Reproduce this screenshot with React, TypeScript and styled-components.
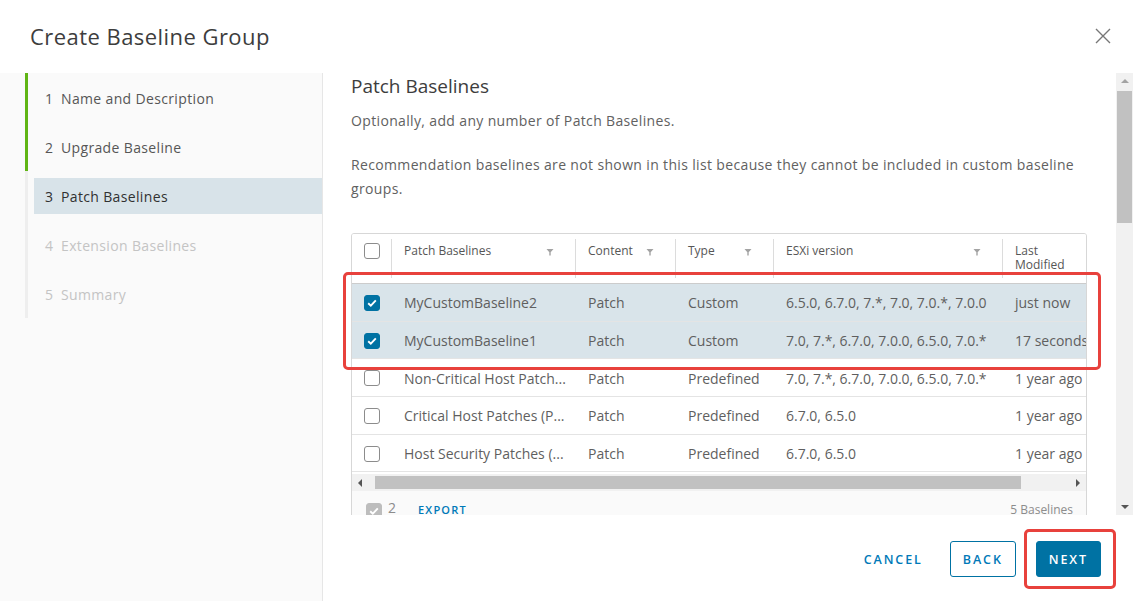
import React from "react";
import styled, { createGlobalStyle } from "styled-components";

const Global = createGlobalStyle`
  html, body { margin: 0; padding: 0; background: #fff; }
  body { font-family: "Open Sans", "Noto Sans", sans-serif; color: #565656; }
  * { box-sizing: border-box; }
`;

const Modal = styled.div`
  width: 1137px;
  height: 601px;
  display: flex;
  flex-direction: column;
  background: #fff;
  overflow: hidden;
`;

const Header = styled.div`
  height: 73px;
  display: flex;
  align-items: center;
  justify-content: space-between;
  padding: 0 26px 2px 30px;
`;

const Title = styled.h1`
  margin: 0;
  font-size: 22px;
  font-weight: 400;
  color: #3d3d3d;
  letter-spacing: 0.45px;
`;

const CloseBtn = styled.button`
  border: 0;
  background: none;
  padding: 0;
  width: 16px;
  height: 16px;
  display: flex;
`;

const Body = styled.div`
  flex: 1;
  display: flex;
  min-height: 0;
`;

const Sidebar = styled.nav`
  width: 323px;
  background: #fafafa;
  border-right: 1px solid #e6e6e6;
  padding-left: 25px;
`;

const StepWrap = styled.div<{ $done?: boolean }>`
  border-left: 3px solid ${(p) => (p.$done ? "#60b515" : "#eeeeee")};
  padding: 7px 0 6px 6px;
`;

const StepItem = styled.div<{ $active?: boolean; $disabled?: boolean }>`
  height: 36px;
  display: flex;
  align-items: center;
  padding-left: 11px;
  font-size: 14px;
  letter-spacing: 0.35px;
  background: ${(p) => (p.$active ? "#d8e3e9" : "transparent")};
  color: ${(p) => (p.$disabled ? "#c4c4c4" : p.$active ? "#313131" : "#565656")};
`;

const StepNum = styled.span`
  width: 16px;
`;

const Main = styled.div`
  flex: 1;
  display: flex;
  flex-direction: column;
  min-width: 0;
`;

const ScrollArea = styled.div`
  height: 442px;
  display: flex;
`;

const Content = styled.div`
  flex: 1;
  overflow: hidden;
  padding-left: 28px;
  padding-right: 29px;
`;

const Heading = styled.h2`
  margin: 1px 0 0;
  font-size: 19px;
  line-height: 24px;
  font-weight: 400;
  color: #3d3d3d;
`;

const Para = styled.p<{ $mt: number }>`
  margin: ${(p) => p.$mt}px 0 0;
  font-size: 14px;
  line-height: 24px;
  letter-spacing: 0.35px;
  color: #616161;
`;

const TableArea = styled.div`
  position: relative;
  margin-top: 32px;
`;

const Table = styled.div`
  width: 736px;
  border: 1px solid #d7d7d7;
  border-radius: 3px 3px 0 0;
  overflow: hidden;
`;

const Grid = styled.div`
  display: grid;
  grid-template-columns: 40px 184px 100px 98px 229px 140px;
  width: 791px;
`;

const HeadCell = styled.div<{ $first?: boolean }>`
  height: 50px;
  background: #fff;
  border-bottom: 1px solid #cccccc;
  position: relative;
  display: flex;
  align-items: flex-start;
  justify-content: ${(p) => (p.$first ? "center" : "space-between")};
  padding: ${(p) => (p.$first ? "9px 0 0" : "8px 26px 0 12px")};
  font-size: 12px;
  line-height: 14px;
  color: #565656;
  &::after {
    content: "";
    position: absolute;
    right: 0;
    top: 5px;
    bottom: 5px;
    width: 1px;
    background: #dcdcdc;
  }
`;

const HeadLabel = styled.span`
  padding-top: 2px;
`;

const FilterIcon = styled.svg`
  position: absolute;
  right: 22px;
  top: 14px;
`;

const Cell = styled.div<{ $sel?: boolean; $first?: boolean }>`
  height: 37.7px;
  display: flex;
  align-items: center;
  justify-content: ${(p) => (p.$first ? "center" : "flex-start")};
  padding-left: ${(p) => (p.$first ? "0" : "12px")};
  padding-top: 1px;
  background: ${(p) => (p.$sel ? "#d9e4ea" : "#fff")};
  border-bottom: 1px solid #e4e4e4;
  font-size: 14px;
  color: #5f5f5f;
  white-space: nowrap;
  overflow: hidden;
`;

const Box = styled.span<{ $checked?: boolean; $muted?: boolean }>`
  width: 16px;
  height: 16px;
  border-radius: 3px;
  display: inline-flex;
  align-items: center;
  justify-content: center;
  background: ${(p) => (p.$muted ? "#bdbdbd" : p.$checked ? "#0072a3" : "#fff")};
  border: 1px solid ${(p) => (p.$muted ? "#bdbdbd" : p.$checked ? "#0072a3" : "#8c8c8c")};
  flex: none;
`;

const HScroll = styled.div`
  height: 17px;
  margin-top: 2px;
  background: #f1f1f1;
  display: flex;
  align-items: center;
  padding: 0 5px;
  gap: 12px;
`;

const HThumb = styled.div`
  height: 13px;
  flex: 1;
  background: #c1c1c1;
  margin-right: 42px;
`;

const GridFooter = styled.div`
  height: 34px;
  background: #fafafa;
  display: flex;
  align-items: flex-start;
  padding: 12px 13px 0 14px;
  font-size: 12px;
  color: #8c8c8c;
`;

const FooterCount = styled.span`
  margin-left: 6px;
  font-size: 14px;
  line-height: 14px;
  margin-top: -2px;
`;

const ExportLink = styled.span`
  margin-left: 22px;
  color: #0079b8;
  letter-spacing: 1.2px;
  font-weight: 600;
  font-size: 11px;
  line-height: 14px;
`;

const FooterRight = styled.span`
  margin-left: auto;
  line-height: 14px;
`;

const Highlight = styled.div`
  position: absolute;
  border: 3px solid #e8413c;
  border-radius: 5px;
  pointer-events: none;
`;

const RowHighlight = styled(Highlight)`
  left: -8px;
  top: 39px;
  width: 758px;
  height: 98px;
`;

const VScroll = styled.div`
  width: 17px;
  margin-right: 4px;
  background: #f1f1f1;
  display: flex;
  flex-direction: column;
  align-items: center;
  padding: 5px 0 5px;
`;

const VThumb = styled.div`
  width: 15px;
  height: 132px;
  background: #c1c1c1;
  margin-top: 7px;
`;

const Spacer = styled.div`
  flex: 1;
`;

const Footer = styled.div`
  flex: 1;
  display: flex;
  justify-content: flex-end;
  align-items: flex-start;
  padding: 26px 36px 0 0;
`;

const Btn = styled.button<{ $variant: "flat" | "outline" | "solid" }>`
  height: 36px;
  padding: 0 12px;
  border-radius: 3px;
  font-family: "Open Sans", "Noto Sans", sans-serif;
  font-size: 12.5px;
  font-weight: 600;
  letter-spacing: 1.9px;
  text-transform: uppercase;
  border: 1px solid ${(p) => (p.$variant === "flat" ? "transparent" : "#0072a3")};
  background: ${(p) => (p.$variant === "solid" ? "#0072a3" : "#fff")};
  color: ${(p) => (p.$variant === "solid" ? "#fff" : "#0079b8")};
  margin-left: ${(p) => (p.$variant === "outline" ? "14px" : "0")};
`;

const NextWrap = styled.div`
  position: relative;
  margin-left: 20px;
  display: flex;
`;

const NextHighlight = styled(Highlight)`
  top: -12px;
  left: -12px;
  right: -15px;
  bottom: -12px;
`;

const Check = ({ color = "#fff" }: { color?: string }) => (
  <svg width="10" height="8" viewBox="0 0 10 8">
    <path d="M1.2 4.2 L3.8 6.6 L8.8 1.4" fill="none" stroke={color} strokeWidth="1.9" />
  </svg>
);

const Funnel = () => (
  <FilterIcon width="8" height="8" viewBox="0 0 8 8">
    <path d="M0.5 1 H7.5 L4.7 4.2 V7.5 H3.3 V4.2 Z" fill="#a3a3a3" />
  </FilterIcon>
);

const Tri = ({ dir }: { dir: "up" | "down" | "left" | "right" }) => {
  const d = {
    up: "M0 5 L4 1 L8 5 Z",
    down: "M0 1 L8 1 L4 5 Z",
    left: "M5 0 L1 4 L5 8 Z",
    right: "M1 0 L5 4 L1 8 Z",
  }[dir];
  const w = dir === "up" || dir === "down" ? 8 : 6;
  const h = dir === "up" || dir === "down" ? 6 : 8;
  return (
    <svg width={w} height={h} viewBox={`0 0 ${w} ${h}`}>
      <path d={d} fill={dir === "up" ? "#a3a3a3" : "#555"} />
    </svg>
  );
};

const steps = [
  { n: 1, label: "Name and Description", done: true },
  { n: 2, label: "Upgrade Baseline", done: true },
  { n: 3, label: "Patch Baselines", active: true },
  { n: 4, label: "Extension Baselines", disabled: true },
  { n: 5, label: "Summary", disabled: true },
];

const headers = ["Patch Baselines", "Content", "Type", "ESXi version"];

const rows = [
  { name: "MyCustomBaseline2", content: "Patch", type: "Custom", ver: "6.5.0, 6.7.0, 7.*, 7.0, 7.0.*, 7.0.0", mod: "just now", sel: true },
  { name: "MyCustomBaseline1", content: "Patch", type: "Custom", ver: "7.0, 7.*, 6.7.0, 7.0.0, 6.5.0, 7.0.*", mod: "17 seconds ago", sel: true },
  { name: "Non-Critical Host Patch...", content: "Patch", type: "Predefined", ver: "7.0, 7.*, 6.7.0, 7.0.0, 6.5.0, 7.0.*", mod: "1 year ago" },
  { name: "Critical Host Patches (P...", content: "Patch", type: "Predefined", ver: "6.7.0, 6.5.0", mod: "1 year ago" },
  { name: "Host Security Patches (...", content: "Patch", type: "Predefined", ver: "6.7.0, 6.5.0", mod: "1 year ago" },
];

export default function App() {
  return (
    <>
      <Global />
      <Modal>
        <Header>
          <Title>Create Baseline Group</Title>
          <CloseBtn aria-label="Close">
            <svg width="16" height="16" viewBox="0 0 16 16">
              <path d="M1 1 L15 15 M15 1 L1 15" stroke="#777" strokeWidth="1.4" />
            </svg>
          </CloseBtn>
        </Header>
        <Body>
          <Sidebar>
            {steps.map((s) => (
              <StepWrap key={s.n} $done={s.done}>
                <StepItem $active={s.active} $disabled={s.disabled}>
                  <StepNum>{s.n}</StepNum>
                  {s.label}
                </StepItem>
              </StepWrap>
            ))}
          </Sidebar>
          <Main>
            <ScrollArea>
              <Content>
                <Heading>Patch Baselines</Heading>
                <Para $mt={11}>Optionally, add any number of Patch Baselines.</Para>
                <Para $mt={20}>
                  Recommendation baselines are not shown in this list because they cannot be included in custom baseline groups.
                </Para>
                <TableArea>
                  <Table>
                    <Grid>
                      <HeadCell $first>
                        <Box />
                      </HeadCell>
                      {headers.map((h) => (
                        <HeadCell key={h}>
                          <HeadLabel>{h}</HeadLabel>
                          <Funnel />
                        </HeadCell>
                      ))}
                      <HeadCell>
                        <HeadLabel>
                          Last
                          <br />
                          Modified
                        </HeadLabel>
                      </HeadCell>
                      {rows.map((r) => (
                        <React.Fragment key={r.name}>
                          <Cell $first $sel={r.sel}>
                            <Box $checked={r.sel}>{r.sel && <Check />}</Box>
                          </Cell>
                          <Cell $sel={r.sel}>{r.name}</Cell>
                          <Cell $sel={r.sel}>{r.content}</Cell>
                          <Cell $sel={r.sel}>{r.type}</Cell>
                          <Cell $sel={r.sel}>{r.ver}</Cell>
                          <Cell $sel={r.sel}>{r.mod}</Cell>
                        </React.Fragment>
                      ))}
                    </Grid>
                    <HScroll>
                      <Tri dir="left" />
                      <HThumb />
                      <Tri dir="right" />
                    </HScroll>
                    <GridFooter>
                      <Box $muted>
                        <Check />
                      </Box>
                      <FooterCount>2</FooterCount>
                      <ExportLink>EXPORT</ExportLink>
                      <FooterRight>5 Baselines</FooterRight>
                    </GridFooter>
                  </Table>
                  <RowHighlight />
                </TableArea>
              </Content>
              <VScroll>
                <Tri dir="up" />
                <VThumb />
                <Spacer />
                <Tri dir="down" />
              </VScroll>
            </ScrollArea>
            <Footer>
              <Btn $variant="flat">Cancel</Btn>
              <Btn $variant="outline">Back</Btn>
              <NextWrap>
                <Btn $variant="solid">Next</Btn>
                <NextHighlight />
              </NextWrap>
            </Footer>
          </Main>
        </Body>
      </Modal>
    </>
  );
}
